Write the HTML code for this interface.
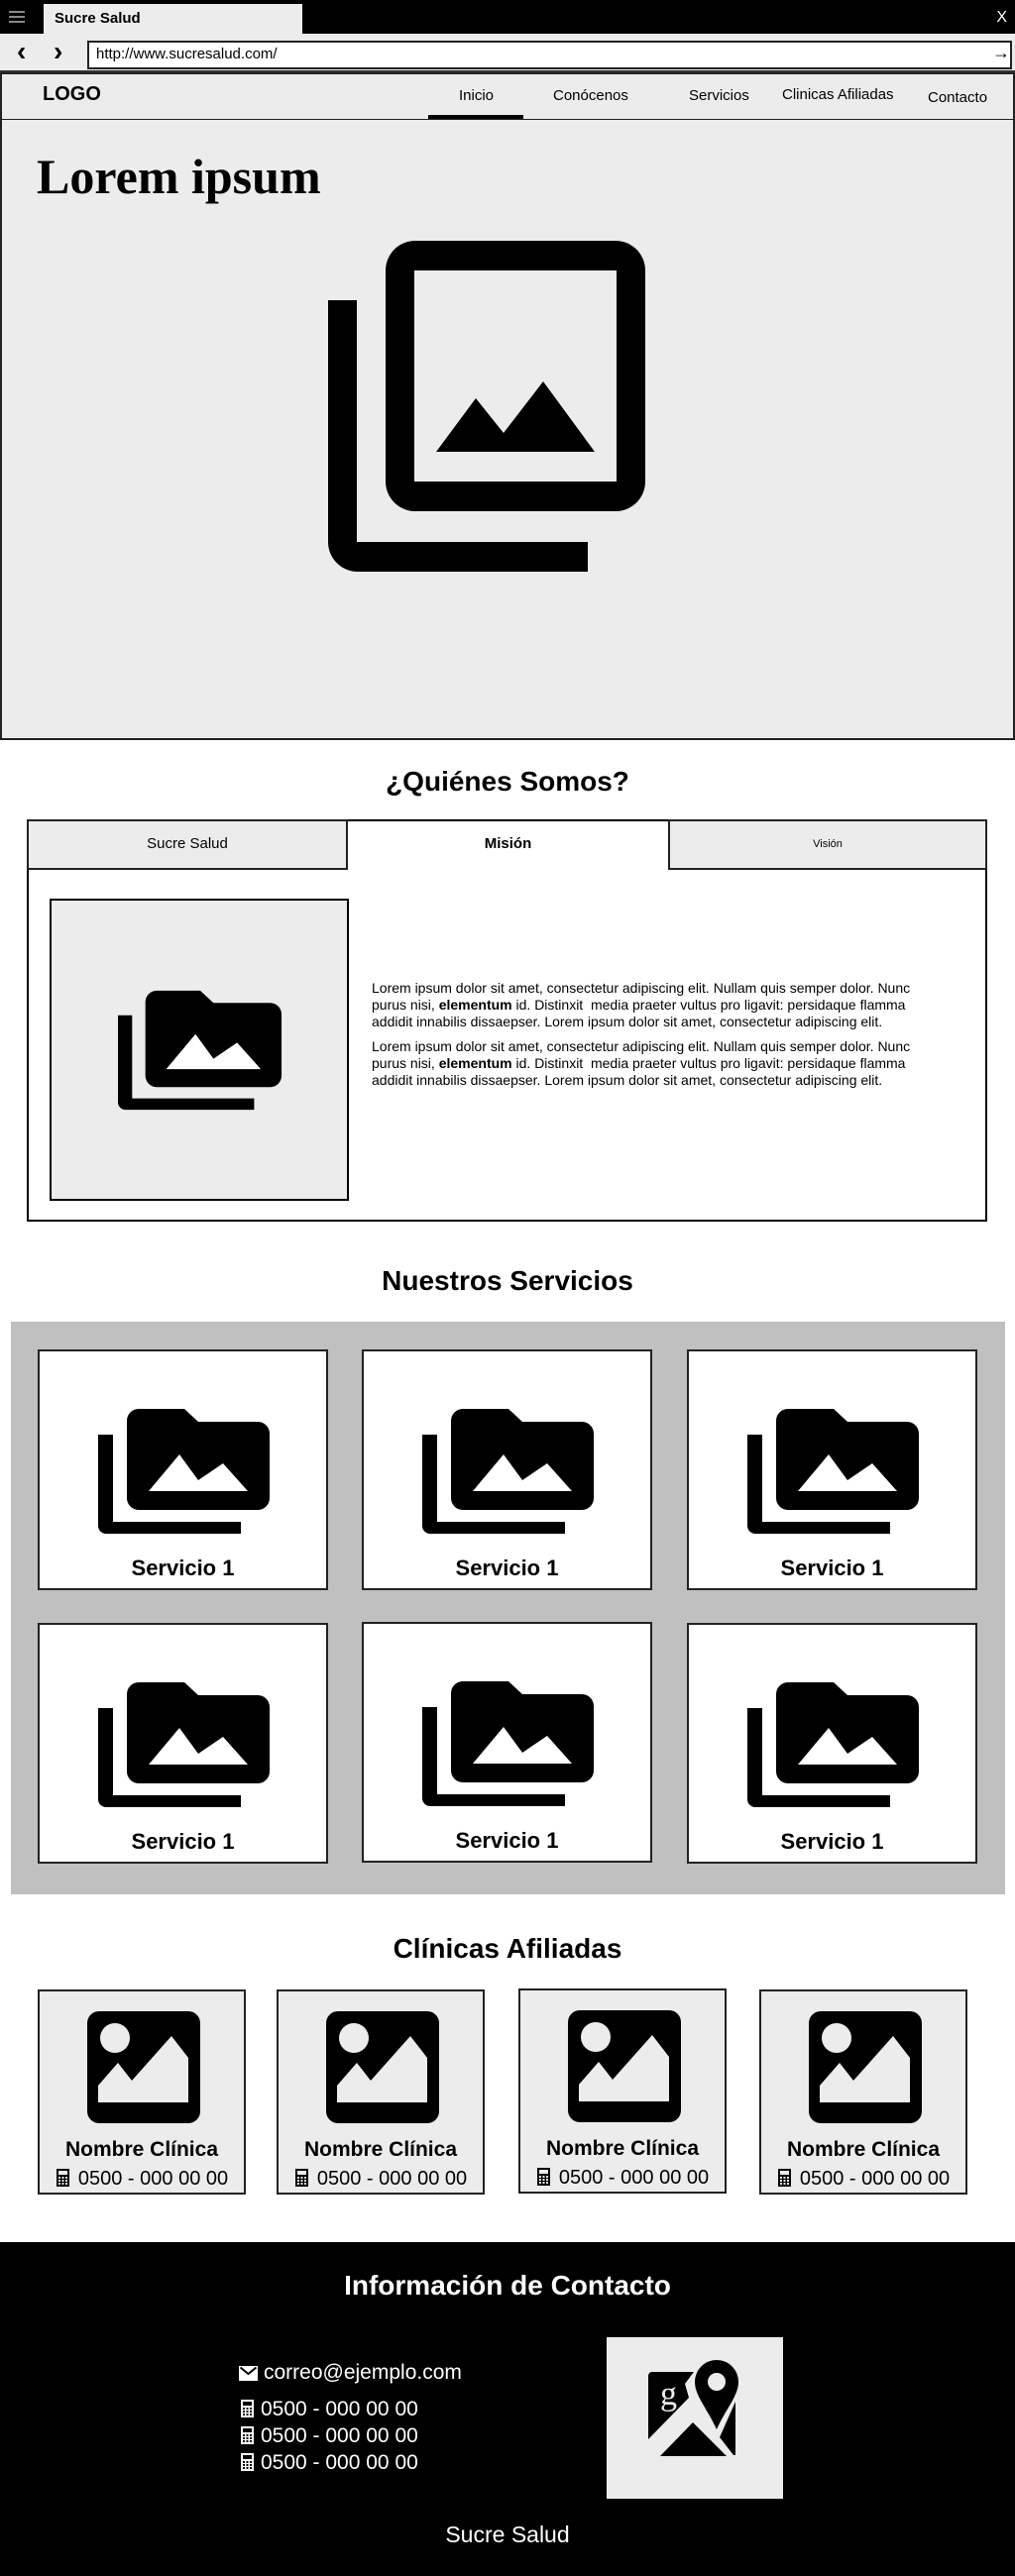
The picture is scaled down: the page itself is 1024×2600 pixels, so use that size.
<!DOCTYPE html>
<html><head><meta charset="utf-8"><style>
*{margin:0;padding:0;box-sizing:border-box}
body{width:1024px;height:2600px;position:relative;background:#fff;font-family:"Liberation Sans",Arial,sans-serif;color:#000;overflow:hidden}
.a{position:absolute}
.c{text-align:center}
.box{position:absolute;border:2px solid #000}
.h2{position:absolute;left:0;width:1024px;text-align:center;font-weight:bold;font-size:28px;line-height:34px}
.card{position:absolute;background:#fff;border:2px solid #222;width:293px;height:243px}
.card svg{position:absolute;left:59px;top:58px}
.card .t{position:absolute;left:0;right:0;top:206px;text-align:center;font-weight:bold;font-size:22px;line-height:26px}
.cl{position:absolute;background:#ececec;border:2px solid #222;width:210px;height:207px;top:2008px}
.cl svg{position:absolute;left:48px;top:20px}
.cl .n{position:absolute;left:0;right:0;top:147px;text-align:center;font-weight:bold;font-size:21px;line-height:26px}
.cl .p{position:absolute;left:0;right:0;top:177px;text-align:center;font-size:20px;line-height:24px}
.ph{display:inline-block;width:15px;height:18px;vertical-align:-2px;margin-right:8px}
</style></head><body>
<svg width="0" height="0" style="position:absolute"><defs>
<symbol id="fold" viewBox="0 0 174 126">
<path d="M0 26h15v88h129v12H8a8 8 0 0 1-8-8z"/>
<path d="M41 0h46l14 13h60a12 12 0 0 1 12 12v65a12 12 0 0 1-12 12H41a12 12 0 0 1-12-12V12A12 12 0 0 1 41 0z"/>
<path d="M51 83L82 46 101 72 126 55 151 83z" fill="#fff"/>
</symbol>
<symbol id="pic" viewBox="0 0 114 113">
<rect x="0" y="0" width="114" height="113" rx="12"/>
<circle cx="28" cy="27" r="15" fill="#ececec"/>
<path d="M11 92V75L31 52 45 70 85 25 102 47V92z" fill="#ececec"/>
</symbol>
<symbol id="phn" viewBox="0 0 15 18">
<path d="M1 0h13v18H1z M3 2v4h9V2z M3 8v2h2V8z M6.5 8v2h2V8z M10 8v2h2V8z M3 11v2h2v-2z M6.5 11v2h2v-2z M10 11v2h2v-2z M3 14v2h2v-2z M6.5 14v2h2v-2z M10 14v2h2v-2z" fill-rule="evenodd"/>
</symbol>
</defs></svg>

<div class="a" style="left:0;top:0;width:1024px;height:34px;background:#000"></div>
<div class="a" style="left:9px;top:11px;width:16px;height:2px;background:#888;box-shadow:0 5px 0 #888,0 10px 0 #888"></div>
<div class="a" style="left:44px;top:4px;width:261px;height:30px;background:#ececec"></div>
<div class="a" style="left:55px;top:9px;font-weight:bold;font-size:15px;line-height:20px">Sucre Salud</div>
<div class="a" style="right:8px;top:9px;color:#fff;font-size:16px">X</div>
<div class="a" style="left:0;top:34px;width:1024px;height:39px;background:#ececec;border-bottom:2px solid #333"></div>
<div class="a" style="left:17px;top:36px;font-size:28px;font-weight:bold">&#8249;</div>
<div class="a" style="left:54px;top:36px;font-size:28px;font-weight:bold">&#8250;</div>
<div class="a" style="left:88px;top:41px;width:933px;height:29px;background:#fff;border:2px solid #222"></div>
<div class="a" style="left:97px;top:46px;font-size:15px">http://www.sucresalud.com/</div>
<div class="a" style="left:1001px;top:43px;font-size:18px">&rarr;</div>
<div class="a" style="left:0;top:73px;width:1024px;height:49px;background:#ececec;border:2px solid #222"></div>
<div class="a" style="left:43px;top:84px;font-weight:bold;font-size:20px">LOGO</div>
<div class="a" style="left:463px;top:88px;font-size:15px">Inicio</div>
<div class="a" style="left:558px;top:88px;font-size:15px">Conócenos</div>
<div class="a" style="left:695px;top:88px;font-size:15px">Servicios</div>
<div class="a" style="left:789px;top:87px;font-size:15px">Clinicas Afiliadas</div>
<div class="a" style="left:936px;top:90px;font-size:15px">Contacto</div>
<div class="a" style="left:432px;top:116px;width:96px;height:4px;background:#000"></div>
<div class="a" style="left:0;top:121px;width:1024px;height:626px;background:#ececec;border:2px solid #222;border-top:0"></div>
<div class="a" style="left:37px;top:147px;font-family:'Liberation Serif',serif;font-weight:bold;font-size:50px;line-height:62px">Lorem ipsum</div>
<svg class="a" style="left:331px;top:243px" width="320" height="334" viewBox="0 0 320 334">
<path d="M0 60h29v244h233v30H30A30 30 0 0 1 0 304z"/>
<path d="M88 0h202a30 30 0 0 1 30 30v213a30 30 0 0 1-30 30H88a30 30 0 0 1-30-30V30A30 30 0 0 1 88 0z M87 30v213h204V30z" fill-rule="evenodd"/>
<path d="M109 213L149 159 177 194 217 142 269 213z"/>
</svg>
<div class="h2" style="top:772px">¿Quiénes Somos?</div>
<div class="box" style="left:27px;top:827px;width:969px;height:406px"></div>
<div class="a" style="left:27px;top:827px;width:324px;height:51px;background:#ececec;border:2px solid #222"></div>
<div class="a" style="left:674px;top:827px;width:322px;height:51px;background:#ececec;border:2px solid #222"></div>
<div class="a c" style="left:27px;top:843px;width:324px;font-size:15px">Sucre Salud</div>
<div class="a c" style="left:351px;top:843px;width:323px;font-size:15px;font-weight:bold">Misión</div>
<div class="a c" style="left:674px;top:846px;width:322px;font-size:11px">Visión</div>
<div class="a" style="left:50px;top:907px;width:302px;height:305px;background:#ececec;border:2px solid #000"></div>
<svg class="a" style="left:119px;top:990px" width="166" height="140"><use href="#fold"/></svg>
<div class="a" style="left:375px;top:989px;width:560px;font-size:14px;line-height:17px">
<p>Lorem ipsum dolor sit amet, consectetur adipiscing elit. Nullam quis semper dolor. Nunc purus nisi, <b>elementum</b> id. Distinxit &nbsp;media praeter vultus pro ligavit: persidaque flamma addidit innabilis dissaepser. Lorem ipsum dolor sit amet, consectetur adipiscing elit.</p>
<p style="margin-top:8px">Lorem ipsum dolor sit amet, consectetur adipiscing elit. Nullam quis semper dolor. Nunc purus nisi, <b>elementum</b> id. Distinxit &nbsp;media praeter vultus pro ligavit: persidaque flamma addidit innabilis dissaepser. Lorem ipsum dolor sit amet, consectetur adipiscing elit.</p>
</div>
<div class="h2" style="top:1276px">Nuestros Servicios</div>
<div class="a" style="left:11px;top:1334px;width:1003px;height:578px;background:#c0c0c0"></div>
<div class="card" style="left:38px;top:1362px"><svg width="174" height="126"><use href="#fold"/></svg><div class="t">Servicio 1</div></div>
<div class="card" style="left:365px;top:1362px"><svg width="174" height="126"><use href="#fold"/></svg><div class="t">Servicio 1</div></div>
<div class="card" style="left:693px;top:1362px"><svg width="174" height="126"><use href="#fold"/></svg><div class="t">Servicio 1</div></div>
<div class="card" style="left:38px;top:1638px"><svg width="174" height="126"><use href="#fold"/></svg><div class="t">Servicio 1</div></div>
<div class="card" style="left:365px;top:1637px"><svg width="174" height="126"><use href="#fold"/></svg><div class="t">Servicio 1</div></div>
<div class="card" style="left:693px;top:1638px"><svg width="174" height="126"><use href="#fold"/></svg><div class="t">Servicio 1</div></div>
<div class="h2" style="top:1950px">Clínicas Afiliadas</div>
<div class="cl" style="left:38px"><svg width="114" height="113"><use href="#pic"/></svg><div class="n">Nombre Clínica</div><div class="p"><svg class="ph" style="position:static"><use href="#phn"/></svg>0500 - 000 00 00</div></div>
<div class="cl" style="left:279px"><svg width="114" height="113"><use href="#pic"/></svg><div class="n">Nombre Clínica</div><div class="p"><svg class="ph" style="position:static"><use href="#phn"/></svg>0500 - 000 00 00</div></div>
<div class="cl" style="left:523px;top:2007px"><svg width="114" height="113"><use href="#pic"/></svg><div class="n">Nombre Clínica</div><div class="p"><svg class="ph" style="position:static"><use href="#phn"/></svg>0500 - 000 00 00</div></div>
<div class="cl" style="left:766px"><svg width="114" height="113"><use href="#pic"/></svg><div class="n">Nombre Clínica</div><div class="p"><svg class="ph" style="position:static"><use href="#phn"/></svg>0500 - 000 00 00</div></div>
<div class="a" style="left:0;top:2263px;width:1024px;height:337px;background:#000"></div>
<div class="h2" style="top:2290px;color:#fff">Información de Contacto</div>
<svg class="a" style="left:241px;top:2388px" width="19" height="15" viewBox="0 0 19 15"><path d="M0 0h19v15H0z" fill="#fff"/><path d="M1.5 1.5L9.5 8 17.5 1.5" stroke="#000" stroke-width="2" fill="none"/></svg>
<div class="a" style="left:266px;top:2382px;color:#fff;font-size:21px;line-height:26px">correo@ejemplo.com</div>
<div class="a" style="left:242px;top:2418px;color:#fff;font-size:21px;line-height:27px">
<div><svg class="ph" style="fill:#fff;margin-right:6px"><use href="#phn"/></svg>0500 - 000 00 00</div>
<div><svg class="ph" style="fill:#fff;margin-right:6px"><use href="#phn"/></svg>0500 - 000 00 00</div>
<div><svg class="ph" style="fill:#fff;margin-right:6px"><use href="#phn"/></svg>0500 - 000 00 00</div>
</div>
<div class="a" style="left:612px;top:2359px;width:178px;height:163px;background:#ececec"></div>
<svg class="a" style="left:654px;top:2382px" width="100" height="100" viewBox="0 0 100 100">
<path d="M4 12h42l-9 12 4 14L0 80V16a4 4 0 0 1 4-4z"/>
<text x="12" y="45" font-family="Liberation Serif,serif" font-size="34" fill="#ececec">g</text>
<path d="M0 85L47 38 53 48 9 94z" fill="#ececec"/>
<path d="M12 97L45 63 79 97z"/>
<path d="M56 40l10 14v-2zM58 50l8 9 -4-10z"/>
<path d="M69 0a22 22 0 0 1 22 22c0 14-12 26-22 48C59 48 47 36 47 22A22 22 0 0 1 69 0z"/>
<circle cx="69" cy="22" r="9" fill="#ececec"/>
<path d="M88 42v54h-2L72 78z"/>
</svg>
<div class="a c" style="left:0;width:1024px;top:2544px;color:#fff;font-size:23px;line-height:28px">Sucre Salud</div>
</body></html>
